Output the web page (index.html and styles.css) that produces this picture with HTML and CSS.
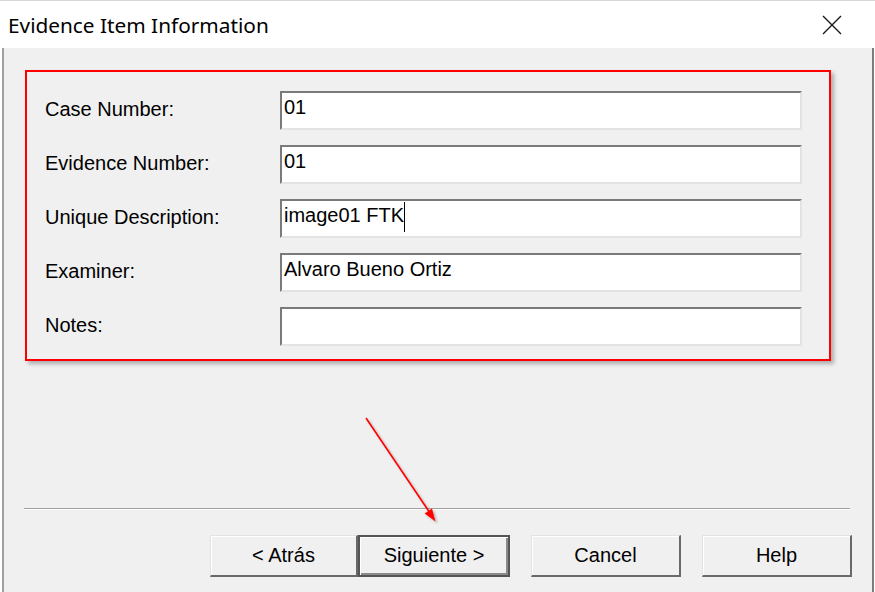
FILE: index.html
```html
<!DOCTYPE html>
<html>
<head>
<meta charset="utf-8">
<title>Evidence Item Information</title>
<link rel="stylesheet" href="styles.css">
</head>
<body>
<div class="window">
  <header class="titlebar">
    <span class="title">Evidence Item Information</span>
    <span class="close" aria-label="Close">
      <svg width="20" height="20" viewBox="0 0 20 20"><path d="M1 1 L19 19 M19 1 L1 19" stroke="#1a1a1a" stroke-width="1.4" fill="none"/></svg>
    </span>
  </header>
  <main class="content">
    <section class="fields">
      <label class="label">Case Number:</label>
      <div class="input">01</div>
      <label class="label">Evidence Number:</label>
      <div class="input">01</div>
      <label class="label">Unique Description:</label>
      <div class="input">image01 FTK<span class="caret"></span></div>
      <label class="label">Examiner:</label>
      <div class="input">Alvaro Bueno Ortiz</div>
      <label class="label">Notes:</label>
      <div class="input"></div>
    </section>
    <div class="separator"></div>
    <div class="buttons">
      <div class="pair">
        <button class="btn back">&lt; Atrás</button>
        <button class="btn next">Siguiente &gt;</button>
      </div>
      <button class="btn">Cancel</button>
      <button class="btn">Help</button>
    </div>
  </main>
  <svg class="arrow" width="875" height="592" viewBox="0 0 875 592">
    <g filter="url(#sh)">
      <line x1="366" y1="418" x2="430" y2="513" stroke="#ff0000" stroke-width="1.6"/>
      <polygon points="435.5,521.5 424.6,513.4 432,508.6" fill="#ff0000"/>
    </g>
    <defs>
      <filter id="sh" x="-20%" y="-20%" width="140%" height="140%">
        <feDropShadow dx="2" dy="2" stdDeviation="1.2" flood-color="#000" flood-opacity="0.25"/>
      </filter>
    </defs>
  </svg>
</div>
</body>
</html>
```
FILE: styles.css
```css
* { box-sizing: border-box; }
html, body { margin: 0; padding: 0; }
body {
  background: #ffffff;
  width: 875px;
  height: 592px;
  overflow: hidden;
}
.window {
  position: relative;
  width: 875px;
  height: 592px;
  display: flex;
  flex-direction: column;
  background: #ffffff;
}
.titlebar {
  height: 48px;
  flex: none;
  background: #ffffff;
  display: flex;
  align-items: center;
  justify-content: space-between;
  padding: 1px 0 0 8px;
  border-top: 1px solid #d8d8d8;
}
.title {
  font-family: "Noto Sans", "Open Sans", sans-serif;
  font-size: 20.8px;
  color: #000;
  line-height: 46px;
}
.close {
  display: flex;
  width: 20px;
  height: 20px;
  margin-right: 33px;
  margin-top: -1px;
}
.content {
  flex: 1;
  display: flex;
  flex-direction: column;
  background: #f0f0f0;
  margin: 0 1px 0 2px;
  border-left: 2px solid #a0a0a0;
  border-right: 2px solid #7c7c7c;
  font-family: "Liberation Sans", Arial, sans-serif;
  font-size: 20px;
  color: #000;
}
.fields {
  margin: 22px 0 0 21px;
  width: 806px;
  height: 291px;
  border: 2px solid #ff0000;
  box-shadow: 3px 3px 4px rgba(0,0,0,0.28);
  padding: 19px 0 0 18px;
  display: grid;
  grid-template-columns: 235px 522px;
  grid-auto-rows: 39px;
  row-gap: 15px;
}
.label {
  align-self: center;
  line-height: 23px;
  padding-bottom: 3px;
}
.input {
  height: 39px;
  background: #ffffff;
  border-top: 2px solid #7a7a7a;
  border-left: 2px solid #7a7a7a;
  border-right: 2px solid #e3e3e3;
  border-bottom: 2px solid #e3e3e3;
  padding: 3px 0 0 2px;
  line-height: 23px;
  white-space: nowrap;
  overflow: hidden;
}
.caret {
  display: inline-block;
  width: 0;
  height: 30px;
  border-left: 1.5px solid #000;
  vertical-align: -10px;
  margin-top: -6px;
}
.separator {
  margin: auto 0 0 20px;
  width: 826px;
  height: 2px;
  border-top: 1px solid #a0a0a0;
  border-bottom: 1px solid #ffffff;
}
.buttons {
  display: flex;
  gap: 21px;
  margin: 25px 0 15px 206px;
}
.pair { display: flex; }
.btn {
  width: 150px;
  height: 42px;
  background: #f0f0f0;
  font-family: "Liberation Sans", Arial, sans-serif;
  font-size: 20px;
  color: #000;
  border-top: 1px solid #e3e3e3;
  border-left: 1px solid #e3e3e3;
  border-right: 2px solid #696969;
  border-bottom: 2px solid #696969;
  box-shadow: inset 1px 1px #ffffff;
  padding: 0 0 1px 0;
  margin: 0;
}
.btn.back { width: 148px; }
.btn.next {
  width: 152px;
  border: 2px solid #555555;
  box-shadow: inset 1px 1px #ffffff, inset -2px -2px #8a8a8a;
}
.arrow {
  position: absolute;
  left: 0;
  top: 0;
  pointer-events: none;
}
```
